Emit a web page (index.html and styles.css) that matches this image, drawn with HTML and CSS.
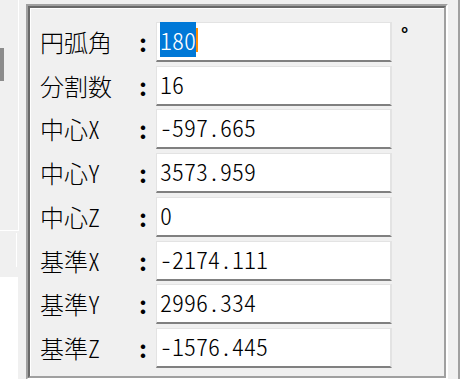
FILE: index.html
```html
<!DOCTYPE html>
<html lang="ja">
<head>
    <meta charset="UTF-8">
    <meta name="viewport" content="width=device-width, initial-scale=1.0">
    <title>円弧</title>
    <link rel="stylesheet" href="styles.css">
</head>
<body>
    <div class="window">
        <!-- left strip of the neighbouring pane -->
        <div class="side">
            <div class="side-top"><div class="tab"></div></div>
            <div class="side-box"></div>
            <div class="side-foot"></div>
            <div class="side-rest"></div>
        </div>
        <div class="gutter"></div>

        <!-- arc settings group -->
        <div class="frame">
            <div class="frame-in">
                <div class="panel">
                    <div class="row">
                        <span class="label">円弧角</span>
                        <span class="colon">:</span>
                        <div class="field"><span class="sel">180</span><span class="caret"></span></div>
                        <span class="unit">°</span>
                    </div>
                    <div class="row">
                        <span class="label">分割数</span>
                        <span class="colon">:</span>
                        <div class="field">16</div>
                    </div>
                    <div class="row">
                        <span class="label">中心X</span>
                        <span class="colon">:</span>
                        <div class="field">-597.665</div>
                    </div>
                    <div class="row">
                        <span class="label">中心Y</span>
                        <span class="colon">:</span>
                        <div class="field">3573.959</div>
                    </div>
                    <div class="row">
                        <span class="label">中心Z</span>
                        <span class="colon">:</span>
                        <div class="field">0</div>
                    </div>
                    <div class="row">
                        <span class="label">基準X</span>
                        <span class="colon">:</span>
                        <div class="field">-2174.111</div>
                    </div>
                    <div class="row">
                        <span class="label">基準Y</span>
                        <span class="colon">:</span>
                        <div class="field">2996.334</div>
                    </div>
                    <div class="row">
                        <span class="label">基準Z</span>
                        <span class="colon">:</span>
                        <div class="field">-1576.445</div>
                    </div>
                </div>
            </div>
        </div>

        <div class="spacer"></div>
        <div class="edge"></div>
    </div>
</body>
</html>
```

FILE: styles.css
```css
* {
    box-sizing: border-box;
}
body {
    margin: 0;
    background: #f0f0f0;
    font-family: "Noto Sans CJK JP", sans-serif;
    font-feature-settings: "hwid";
    font-weight: 300;
    color: #000;
    overflow: hidden;
}
.window {
    display: flex;
    height: 379px;
}

/* left pane edge */
.side {
    width: 19px;
    display: flex;
    flex-direction: column;
}
.side-top {
    height: 231px;
    border-right: 1px solid #fff;
    border-bottom: 1px solid #fff;
    padding-top: 48px;
}
.tab {
    width: 4px;
    height: 33px;
    background: #8c8c8c;
}
.side-box {
    margin-top: 2px;
    width: 17px;
    height: 34px;
    border-right: 1px solid #fff;
}
.side-foot {
    width: 18px;
    height: 10px;
}
.side-rest {
    flex: 1;
    width: 18px;
    background: #fff;
}
.gutter {
    width: 7px;
}

/* sunken group frame */
.frame {
    width: 422px;
    height: 376px;
    margin-top: 4px;
    border: 2px solid;
    border-color: #a0a0a0 #fff #fff #a0a0a0;
}
.frame-in {
    height: 100%;
    border: 2px solid;
    border-color: #696969 #a0a0a0 #a0a0a0 #696969;
}
.panel {
    height: 100%;
    border-top: 1px solid #fff;
    border-left: 1px solid #fff;
    padding: 13px 0 0 9px;
    display: flex;
    flex-direction: column;
    gap: 3.72px;
}
.row {
    display: flex;
    height: 40px;
    font-size: 24px;
}
.label {
    width: 97px;
    line-height: 40px;
}
.colon {
    width: 19px;
    line-height: 40px;
    font-weight: 700;
}
.field {
    width: 236px;
    background: #fff;
    border-style: solid;
    border-width: 1px 2px 2px 1px;
    border-color: #e3e3e3 #e3e3e3 #808080 #e3e3e3;
    padding: 5px 0 0 3px;
    line-height: 24px;
    white-space: nowrap;
}
.sel {
    background: #0078d7;
    color: #fff;
}
.caret {
    display: inline-block;
    width: 2px;
    height: 24px;
    vertical-align: top;
    background: #ff8c00;
}
.unit {
    padding: 2px 0 0 9px;
    font-size: 18px;
    line-height: 18px;
    font-weight: 700;
}
.spacer {
    width: 10px;
}
.edge {
    width: 2px;
    background: #a0a0a0;
}
```
